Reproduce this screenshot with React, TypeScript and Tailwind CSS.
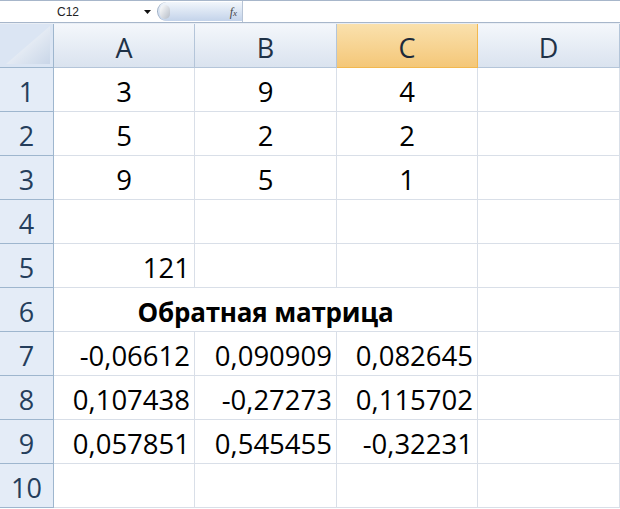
import React from "react";

const cols = ["A", "B", "C", "D"];

type Cell = { v?: string; align?: "center" | "right"; bold?: boolean; span?: number };

const rows: Cell[][] = [
  [{ v: "3", align: "center" }, { v: "9", align: "center" }, { v: "4", align: "center" }, {}],
  [{ v: "5", align: "center" }, { v: "2", align: "center" }, { v: "2", align: "center" }, {}],
  [{ v: "9", align: "center" }, { v: "5", align: "center" }, { v: "1", align: "center" }, {}],
  [{}, {}, {}, {}],
  [{ v: "121", align: "right" }, {}, {}, {}],
  [{ v: "Обратная матрица", align: "center", bold: true, span: 3 }, {}],
  [{ v: "-0,06612", align: "right" }, { v: "0,090909", align: "right" }, { v: "0,082645", align: "right" }, {}],
  [{ v: "0,107438", align: "right" }, { v: "-0,27273", align: "right" }, { v: "0,115702", align: "right" }, {}],
  [{ v: "0,057851", align: "right" }, { v: "0,545455", align: "right" }, { v: "-0,32231", align: "right" }, {}],
  [{}, {}, {}, {}],
];

function FormulaBar() {
  return (
    <div className="flex h-[23px] border-y border-[#a7b6ca] bg-white">
      <div className="relative flex w-[157px] items-center">
        <span className="pl-[57px] text-[12px] text-[#222]" style={{ fontFamily: "'Liberation Sans', sans-serif" }}>
          C12
        </span>
        <svg className="absolute left-[144px] top-[9px]" width="7" height="4" viewBox="0 0 7 4">
          <path d="M0 0h7L3.5 4z" fill="#111" />
        </svg>
      </div>
      <div className="relative my-[1px] flex w-[85px] items-center justify-end rounded-l-full border-l border-[#9fb0c6] bg-gradient-to-b from-[#f2f6fb] to-[#c3d3ea] pr-[5px]">
        <div className="absolute left-[2px] top-[3px] h-[14px] w-[10px] rounded-full bg-gradient-to-br from-[#ffffff] to-[#b5bcc7]" />
        <span className="text-[12px] italic text-[#444]" style={{ fontFamily: "'Liberation Serif', serif" }}>
          f<span className="text-[9px]">x</span>
        </span>
      </div>
      <div className="flex-1 border-l border-[#b7c4d6]" />
    </div>
  );
}

export default function App() {
  return (
    <div className="h-[509px] w-[620px] overflow-hidden bg-white" style={{ fontFamily: "'Open Sans', sans-serif" }}>
      <FormulaBar />
      <div className="h-[1px] bg-[#e9eef5]" />
      <div className="grid grid-cols-[54px_141px_142px_141px_1fr]">
        <div className="relative h-[44px] border-b border-r border-[#9eb6ce] bg-[#dbe5f3]">
          <svg className="absolute bottom-[3px] right-[3px]" width="44" height="38" viewBox="0 0 44 38">
            <defs>
              <linearGradient id="tri" x1="0" y1="0" x2="1" y2="1">
                <stop offset="0" stopColor="#ffffff" />
                <stop offset="1" stopColor="#c9d6e8" />
              </linearGradient>
            </defs>
            <path d="M44 0V38H0z" fill="url(#tri)" />
          </svg>
        </div>
        {cols.map((c) => (
          <div
            key={c}
            className={
              "flex h-[44px] items-center justify-center border-b border-r pt-[3px] text-[27px] leading-none " +
              (c === "C"
                ? "border-[#f2b84f] bg-gradient-to-b from-[#fae1ad] to-[#f4c778] text-[#1d2a3a]"
                : "border-[#b4c5d9] bg-gradient-to-b from-[#f4f7fb] to-[#dae3ef] text-[#1f3247]")
            }
          >
            {c}
          </div>
        ))}
        {rows.map((r, i) => (
          <React.Fragment key={i}>
            <div className="flex h-[44px] items-center justify-center border-b border-r border-[#9eb6ce] bg-[#e4ecf7] pt-[4px] text-[27px] leading-none text-[#253e5c]">
              {i + 1}
            </div>
            {r.map((cell, j) => (
              <div
                key={j}
                className={
                  "flex h-[44px] items-center overflow-visible whitespace-nowrap border-b border-r border-[#d9dfe8] pt-[4px] leading-none text-black " +
                  (cell.span === 3 ? "col-span-3 " : "") +
                  (cell.align === "right" ? "justify-end pr-[4px] " : "justify-center ") +
                  (cell.bold ? "text-[26px] font-bold tracking-[-0.2px]" : "text-[27.5px]")
                }
              >
                {cell.v}
              </div>
            ))}
          </React.Fragment>
        ))}
      </div>
    </div>
  );
}
